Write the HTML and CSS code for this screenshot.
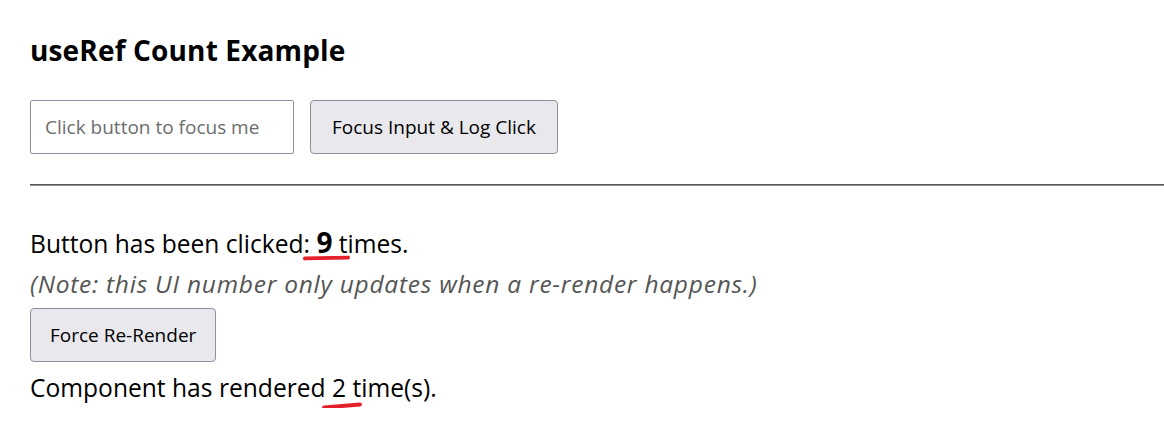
FILE: index.html
```html
<!DOCTYPE html>
<html lang="en">
<head>
<meta charset="utf-8">
<title>useRef Count Example</title>
<link rel="stylesheet" href="styles.css">
</head>
<body>
<main class="app">
  <h2 class="title">useRef Count Example</h2>
  <div class="controls">
    <input class="field" type="text" placeholder="Click button to focus me">
    <button class="btn btn-wide" type="button">Focus Input &amp; Log Click</button>
  </div>
  <hr class="rule">
  <p class="line">Button has been clicked<span class="mark mark-one">: <strong class="count">9</strong> </span>times.</p>
  <p class="note">(Note: this UI number only updates when a re-render happens.)</p>
  <button class="btn" type="button">Force Re-Render</button>
  <p class="line line-last">Component has rendered<span class="mark mark-two"> 2 t</span>ime(s).</p>
</main>
</body>
</html>
```

FILE: styles.css
```css
html, body {
  margin: 0;
  padding: 0;
  background: #ffffff;
  overflow: hidden;
}

.app {
  padding: 33px 0 0 30px;
  font-family: "Open Sans", "Noto Sans", sans-serif;
  color: #000;
}

.title {
  margin: 0 0 33px;
  font-size: 28px;
  font-weight: 700;
  line-height: 34px;
  letter-spacing: 0.15px;
}

.controls {
  display: flex;
  gap: 16px;
  align-items: center;
}

.field {
  box-sizing: border-box;
  width: 264px;
  height: 54px;
  padding: 0 14px;
  border: 1px solid #8f8f9d;
  border-radius: 2px;
  font-family: inherit;
  font-size: 19px;
  color: #000;
}

.field::placeholder {
  color: #6d6d6d;
}

.btn {
  box-sizing: border-box;
  height: 54px;
  padding: 0 19px;
  background: #e9e9ed;
  border: 1px solid #8f8f9d;
  border-radius: 4px;
  font-family: inherit;
  font-size: 19px;
  color: #000;
}

.btn-wide {
  padding: 0 21px;
}

.rule {
  margin: 30px -40px 36px 0;
  border: 0;
  border-top: 1px solid #5a5a5a;
  border-bottom: 1px solid #8a8a8a;
  height: 0;
}

.line {
  margin: 0;
  font-size: 24.6px;
  line-height: 40px;
}

.note {
  margin: 0 0 4px;
  font-size: 24.5px;
  line-height: 40px;
  letter-spacing: 0.75px;
  font-style: italic;
  color: #555;
}

.line-last {
  margin-top: 6px;
}

.count {
  font-size: 28px;
  font-weight: 700;
}

.mark {
  position: relative;
}

.mark::after {
  content: "";
  position: absolute;
  height: 4px;
  border-radius: 3px;
  background: #e5202a;
}

.mark-one::after {
  left: -1px;
  width: 47px;
  bottom: 0;
  transform: rotate(-1deg);
}

.mark-two::after {
  left: -4px;
  width: 40px;
  bottom: -4px;
  transform: rotate(-5deg);
}
```
